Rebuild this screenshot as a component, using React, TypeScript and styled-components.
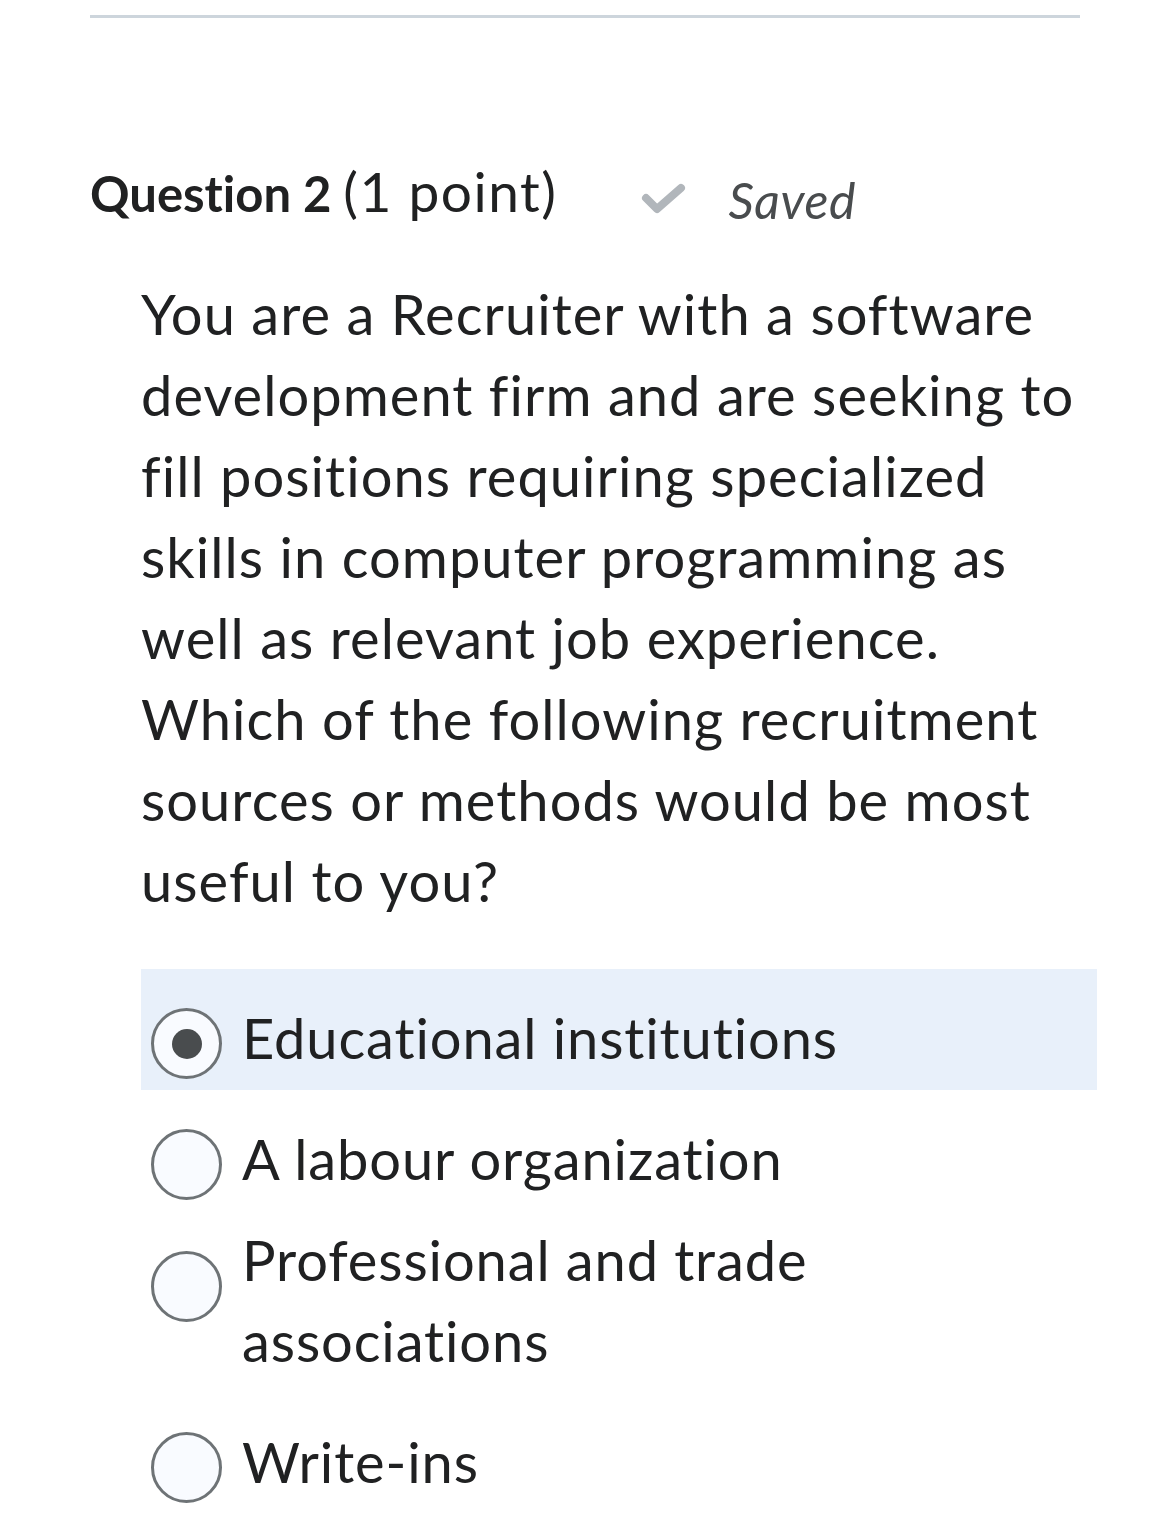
import React from 'react';
import styled, { createGlobalStyle } from 'styled-components';

const GlobalStyle = createGlobalStyle`
  body {
    margin: 0;
    background: #ffffff;
    font-family: Lato, "Noto Sans", sans-serif;
    font-variant-ligatures: none;
    color: #202122;
  }
`;

const Page = styled('div')`
  padding: 15px 90px 40px;
`;

const Divider = styled('hr')`
  margin: 0;
  border: none;
  height: 3px;
  background-color: #cdd5dc;
`;

const Header = styled('div')`
  display: flex;
  align-items: flex-start;
  margin-top: 143px;
`;

const Title = styled('h2')`
  margin: 0;
  font-size: 49px;
  font-weight: 700;
  line-height: 60px;

  > span {
    font-size: 55px;
    font-weight: 400;
    letter-spacing: 1.5px;
  }
`;

const SavedStatus = styled('div')`
  display: flex;
  align-items: flex-start;
  margin: 9px 0 0 83px;
  color: #494c4e;
  font-size: 50px;
  font-style: italic;
  line-height: 60px;
  letter-spacing: 0.6px;

  > svg {
    margin: 12px 42px 0 0;
  }
`;

const QuestionBody = styled('div')`
  margin: 43px -17px 0 51px;
`;

const Prompt = styled('p')`
  margin: 0;
  font-size: 56px;
  line-height: 81px;
  letter-spacing: 1.05px;
`;

const Options = styled('fieldset')`
  margin: 48px 0 0;
  padding: 0;
  border: none;
`;

const Option = styled('label')<{ $selected?: boolean; $wrapped?: boolean }>`
  display: flex;
  align-items: flex-start;
  padding: ${(p) => (p.$wrapped ? '8px 0 12px' : '28px 0 11px')};
  background-color: ${(p) => (p.$selected ? '#e8f0fa' : 'transparent')};
  font-size: 56px;
  line-height: 81px;
  letter-spacing: 0.9px;
`;

const Radio = styled('span')<{ $checked?: boolean; $wrapped?: boolean }>`
  flex: none;
  display: flex;
  align-items: center;
  justify-content: center;
  box-sizing: border-box;
  width: 71px;
  height: 71px;
  margin: ${(p) => (p.$wrapped ? '32px' : '11px')} 20px 0 10px;
  border: 3px solid #6e7376;
  border-radius: 50%;
  background-color: #f9fbff;

  &::after {
    content: '';
    display: ${(p) => (p.$checked ? 'block' : 'none')};
    width: 30px;
    height: 30px;
    border-radius: 50%;
    background-color: #494c4e;
  }
`;

const choices = [
  { text: 'Educational institutions', selected: true },
  { text: 'A labour organization' },
  { text: 'Professional and trade associations', wrapped: true },
  { text: 'Write-ins' },
];

function App() {
  return (
    <Page>
      <GlobalStyle />
      <Divider />
      <Header>
        <Title>
          Question 2 <span>(1 point)</span>
        </Title>
        <SavedStatus>
          <svg width="46" height="34" viewBox="0 0 46 34">
            <path
              d="M6 16 L17 27 L41 6"
              fill="none"
              stroke="#b1b6bb"
              strokeWidth="8"
              strokeLinecap="round"
              strokeLinejoin="round"
            />
          </svg>
          Saved
        </SavedStatus>
      </Header>
      <QuestionBody>
        <Prompt>
          You are a Recruiter with a software development firm and are seeking to fill
          positions requiring specialized skills in computer programming as well as
          relevant job experience. Which of the following recruitment sources or methods
          would be most useful to you?
        </Prompt>
        <Options>
          {choices.map((c) => (
            <Option key={c.text} $selected={c.selected} $wrapped={c.wrapped}>
              <Radio $checked={c.selected} $wrapped={c.wrapped} />
              <span>{c.text}</span>
            </Option>
          ))}
        </Options>
      </QuestionBody>
    </Page>
  );
}

export default App;
